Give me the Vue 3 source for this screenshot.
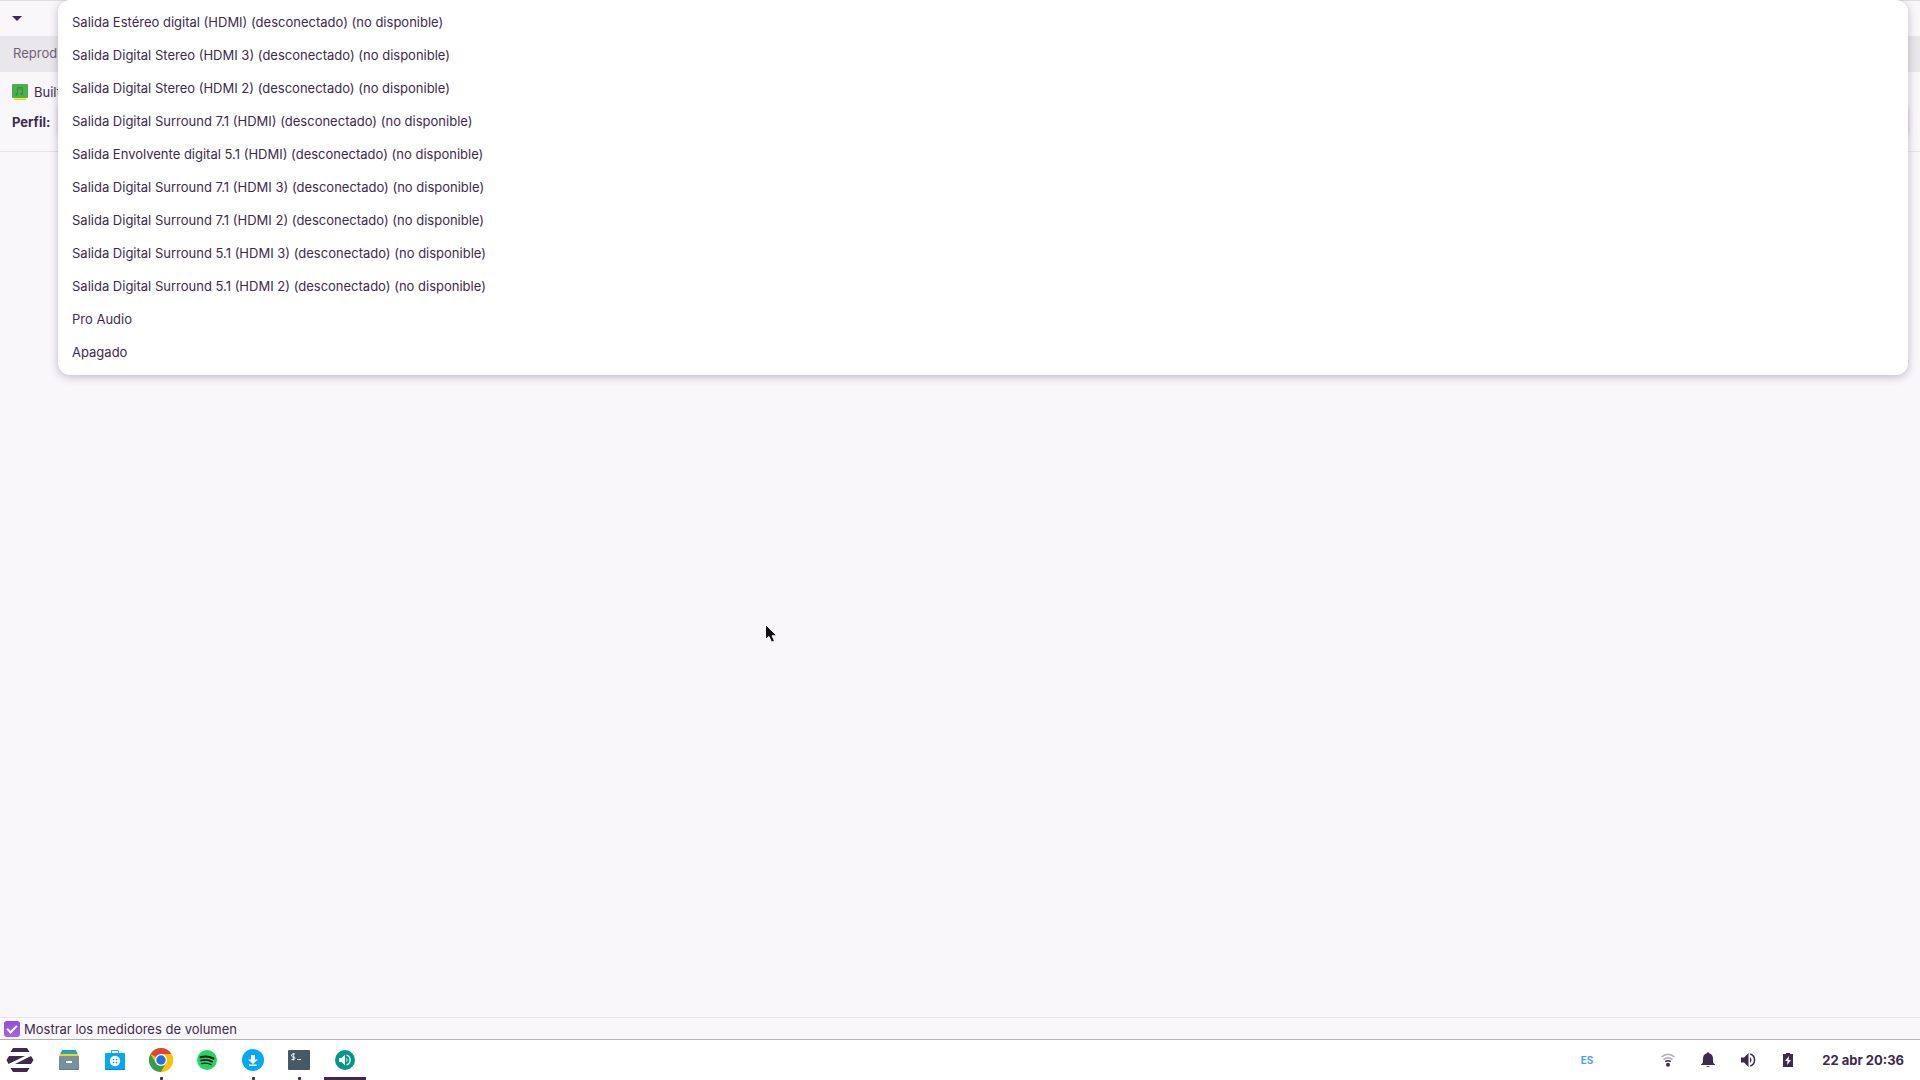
<template>
  <div class="desktop">
    <main class="window">
      <header class="titlebar">
        <button class="window-menu" aria-label="Menú de la ventana">
          <svg width="10" height="5" viewBox="0 0 10 5"><path d="M0 0h10L5 5z" fill="#3d2a4d" /></svg>
        </button>
      </header>

      <nav class="tabs">
        <button class="tab">Reprod</button>
      </nav>

      <section class="card">
        <div class="card-title">
          <svg width="16" height="16" viewBox="0 0 16 16">
            <path d="M2 13h12v3H2z" fill="#fbc02d" />
            <path d="M2 13h12v2H2z" fill="#ffeb3b" />
            <rect width="16" height="14" rx="1" fill="#4caf50" />
            <path d="M5.5 10V3.500h5v6M5.500 5h5" fill="none" stroke="#388e3c" />
            <circle cx="4.800" cy="10.300" r="1.200" fill="#388e3c" />
            <circle cx="9.800" cy="9.700" r="1.200" fill="#388e3c" />
          </svg>
          <span class="card-name">Built</span>
        </div>
        <div class="profile-row">
          <label for="profile">Perfil:</label>
          <select id="profile" v-model="selected" class="profile-select">
            <option v-for="profile in profiles" :key="profile" :value="profile">{{ profile }}</option>
          </select>
        </div>
      </section>

      <div class="device-space"></div>

      <footer class="meters">
        <input id="meters" v-model="showMeters" type="checkbox" />
        <label for="meters">Mostrar los medidores de volumen</label>
      </footer>

      <ul class="menu">
        <li v-for="profile in profiles" :key="profile">
          <button class="menu-item" @click="selected = profile">{{ profile }}</button>
        </li>
      </ul>
    </main>

    <footer class="taskbar">
      <button class="start" aria-label="Menú de Zorin">
        <svg width="28" height="24" viewBox="0 0 28 24" fill="#3d2a4d">
          <path d="M7 0h14l2.500 4h-19z" />
          <path d="M3 8h16L2.500 16 .5 12z" />
          <path d="M25 8l2.500 4-2.500 4H9z" />
          <path d="M4.500 20h19L21 24H7z" />
        </svg>
      </button>

      <div class="apps">
        <button
          v-for="app in apps"
          :key="app.name"
          :class="['app', { running: app.running, active: app.active }]"
          :aria-label="app.label"
        >
          <svg v-if="app.name === 'files'" width="24" height="24" viewBox="0 0 24 24">
            <path d="M5 2h14l1 3H4z" fill="#2196f3" />
            <path d="M4 4h16l1 3H3z" fill="#26b08a" />
            <path d="M3 6h18l1 3H2z" fill="#ffca28" />
            <rect x="2" y="8" width="20" height="14" rx="1" fill="#78909c" />
            <path d="M2 21h20v.5l-1 .5H3l-1-.5z" fill="#607d8b" />
            <rect x="9" y="13" width="6" height="2" fill="#fff" />
          </svg>

          <svg v-else-if="app.name === 'store'" width="24" height="24" viewBox="0 0 24 24">
            <path d="M8.500 5V2.500h7V5" fill="none" stroke="#29a9e8" />
            <rect x="2" y="5" width="20" height="17" rx="1" fill="#03a9f4" />
            <path d="M2 21h20v.5l-1 .5H3l-1-.5z" fill="#0288d1" />
            <circle cx="12" cy="13" r="5.200" fill="#fff" />
            <g fill="#0288d1">
              <circle cx="10.500" cy="11.500" r=".8" />
              <circle cx="13.500" cy="11.500" r=".8" />
              <circle cx="10.500" cy="14.500" r=".8" />
              <circle cx="13.500" cy="14.500" r=".8" />
            </g>
          </svg>

          <svg v-else-if="app.name === 'chrome'" width="24" height="24" viewBox="0 0 24 24">
            <circle cx="12" cy="12" r="12" fill="#ffc107" />
            <path d="M12 12L1.600 6A12 12 0 0 1 22.400 6H12z" fill="#db4437" />
            <path d="M1.600 6A12 12 0 0 0 12 24l5.200-9L12 12 6.800 15z" fill="#2e9e4f" />
            <path d="M12 6h10.400A12 12 0 0 1 12 24l5.200-9z" fill="#ffc107" />
            <circle cx="12" cy="12" r="6" fill="#fff" />
            <circle cx="12" cy="12" r="4.700" fill="#1a73e8" />
          </svg>

          <svg v-else-if="app.name === 'spotify'" width="24" height="24" viewBox="0 0 24 24">
            <circle cx="12" cy="12" r="10" fill="#1ed760" />
            <g fill="none" stroke="#191414" stroke-linecap="round">
              <path d="M5.500 9.200c4-1.300 9-.8 13 1.300" stroke-width="2" />
              <path d="M6 12.500c4-1.100 8-.6 11.300 1.200" stroke-width="1.700" />
              <path d="M6.500 15.600c3.500-.9 6.800-.5 9.500 1" stroke-width="1.400" />
            </g>
          </svg>

          <svg v-else-if="app.name === 'download'" width="24" height="24" viewBox="0 0 24 24">
            <circle cx="12" cy="12" r="11" fill="#03a9f4" />
            <path d="M10 7h4v4.500h3L12 16l-5-4.500h3zM8 16.500h8v1.500H8z" fill="#fff" />
          </svg>

          <svg v-else-if="app.name === 'terminal'" width="24" height="24" viewBox="0 0 24 24">
            <rect x="1" y="2" width="22" height="20" rx="1" fill="#455a64" />
            <path d="M8 6H5.500L4.500 7v1l1 .8h1.500l1 .8v1L7 11.500H4.500M6.300 5v7.500M10 11.500h4" fill="none" stroke="#e1f5fe" />
          </svg>

          <svg v-else width="24" height="24" viewBox="0 0 24 24">
            <circle cx="12" cy="12" r="10" fill="#009688" />
            <path d="M6 10h2.500L12 6.800v10.400L8.500 14H6z" fill="#fff" />
            <path d="M13.500 9.500q2 2.500 0 5z" fill="#fff" />
            <path d="M13.500 7.200a5 5 0 0 1 0 9.600" fill="none" stroke="#fff" stroke-width="1.300" />
          </svg>
        </button>
      </div>

      <div class="tray">
        <button class="keyboard" aria-label="Idioma del teclado">ES</button>
        <button class="tray-item" aria-label="Red">
          <svg width="16" height="16" viewBox="0 0 16 16" fill="none" stroke="#3d2a4d">
            <path d="M1.500 5Q8-.5 14.500 5" stroke-width="1.600" opacity=".4" />
            <path d="M3.500 7.500Q8 4 12.500 7.500" stroke-width="1.600" opacity=".4" />
            <path d="M5.200 9.700Q8 7.800 10.800 9.700" stroke-width="1.500" />
            <circle cx="8" cy="12.800" r="2" fill="#3d2a4d" stroke="none" />
          </svg>
        </button>
        <button class="tray-item" aria-label="Notificaciones">
          <svg width="16" height="16" viewBox="0 0 16 16" fill="#3d2a4d">
            <path d="M7 1.300a1 1 0 0 1 2 0C12 2 13 4.200 13 7v3.500l2 2V13H1v-.5l2-2V7c0-2.800 1-5 4-5.700zM6 14h4q-2 2-4 0z" />
          </svg>
        </button>
        <button class="tray-item" aria-label="Volumen">
          <svg width="16" height="16" viewBox="0 0 16 16">
            <path d="M1 5.500h3L8.500 1v14L4 10.500H1z" fill="#3d2a4d" />
            <path d="M10 5q3 3 0 6z" fill="#3d2a4d" />
            <path d="M10.200 2a6.300 6.300 0 0 1 0 12" fill="none" stroke="#3d2a4d" stroke-width="1.500" />
          </svg>
        </button>
        <button class="tray-item" aria-label="Batería">
          <svg width="16" height="16" viewBox="0 0 16 16">
            <path d="M6 1h4v1h3v13H3V2h3z" fill="#3d2a4d" />
            <path d="M9 4L5 9h2.500L7 13l4-5H8.500z" fill="#fff" />
          </svg>
        </button>
        <time class="clock">22 abr 20:36</time>
      </div>
    </footer>

    <svg class="pointer" width="13" height="20" viewBox="0 0 13 20">
      <path d="M.5.500v15l3.500-3 2.500 5.700 3-1.300L7 11.800h5z" fill="#111" stroke="#fff" />
    </svg>
  </div>
</template>

<script setup>
import { ref } from 'vue'

const profiles = [
  'Salida Estéreo digital (HDMI) (desconectado) (no disponible)',
  'Salida Digital Stereo (HDMI 3) (desconectado) (no disponible)',
  'Salida Digital Stereo (HDMI 2) (desconectado) (no disponible)',
  'Salida Digital Surround 7.1 (HDMI) (desconectado) (no disponible)',
  'Salida Envolvente digital 5.1 (HDMI) (desconectado) (no disponible)',
  'Salida Digital Surround 7.1 (HDMI 3) (desconectado) (no disponible)',
  'Salida Digital Surround 7.1 (HDMI 2) (desconectado) (no disponible)',
  'Salida Digital Surround 5.1 (HDMI 3) (desconectado) (no disponible)',
  'Salida Digital Surround 5.1 (HDMI 2) (desconectado) (no disponible)',
  'Pro Audio',
  'Apagado'
]

const apps = [
  { name: 'files', label: 'Archivos' },
  { name: 'store', label: 'Software' },
  { name: 'chrome', label: 'Google Chrome', running: true },
  { name: 'spotify', label: 'Spotify' },
  { name: 'download', label: 'Descargas', running: true },
  { name: 'terminal', label: 'Terminal', running: true },
  { name: 'volume', label: 'Control de volumen', active: true }
]

const selected = ref('Apagado')
const showMeters = ref(true)
</script>

<style>
body {
  margin: 0;
}
</style>

<style scoped>
.desktop {
  position: relative;
  display: flex;
  flex-direction: column;
  min-height: 100vh;
  overflow: hidden;
  background: #f9f7fa;
  color: #3d2a4d;
  font-family: Inter, "Liberation Sans", sans-serif;
  font-size: 13px;
  line-height: 20px;
}

button {
  display: flex;
  align-items: center;
  padding: 0;
  border: 0;
  background: none;
  color: inherit;
  font: inherit;
}

svg {
  display: block;
  flex: none;
}

.window {
  position: relative;
  display: flex;
  flex: 1;
  flex-direction: column;
}

.titlebar {
  display: flex;
  align-items: center;
  box-sizing: border-box;
  height: 36px;
  padding: 0 12px;
  border-top: 1px solid #dfdce2;
}

.tabs {
  display: flex;
  box-sizing: border-box;
  height: 36px;
  padding: 0 13px 2px;
  background: #e9e7eb;
}

.tab {
  color: #6f5f7c;
}

.card {
  display: flex;
  flex-direction: column;
  gap: 3px;
  padding: 10px 12px 13px;
  border-bottom: 1px solid #e6e3e9;
}

.card-title {
  display: flex;
  align-items: center;
  gap: 6px;
}

.profile-row {
  display: flex;
  align-items: center;
  gap: 6px;
}

.profile-row label {
  width: 40px;
  font-weight: 700;
}

.profile-select {
  flex: 1;
  min-width: 0;
  height: 33px;
  border: 0;
  border-radius: 6px;
  background: #fff;
  box-shadow: 0 0 4px rgba(150, 80, 200, 0.3);
  color: inherit;
  font: inherit;
}

.device-space {
  flex: 1;
}

.meters {
  display: flex;
  align-items: center;
  gap: 4px;
  height: 21px;
  padding: 0 4px;
  border-top: 1px solid #e6e3e9;
}

.meters input {
  display: grid;
  place-items: center;
  width: 16px;
  height: 16px;
  margin: 0;
  border-radius: 3px;
  appearance: none;
  background: linear-gradient(#8e4fd8, #a268e8);
}

.meters input:checked::after {
  width: 8px;
  height: 4px;
  border: solid #fff;
  border-width: 0 0 2px 2px;
  content: "";
  transform: translateY(-1px) rotate(-45deg);
}

.menu {
  position: absolute;
  top: 0;
  right: 12px;
  left: 58px;
  margin: 0;
  padding: 5px 0 7px;
  border-radius: 12px;
  background: #fff;
  box-shadow: 0 2px 8px rgba(61, 42, 77, 0.3);
  list-style: none;
}

.menu-item {
  width: 100%;
  height: 33px;
  padding: 0 14px;
}

.taskbar {
  display: flex;
  align-items: stretch;
  height: 40px;
  border-top: 1px solid #b3b0b6;
  background: #fff;
}

.start {
  justify-content: center;
  width: 40px;
}

.apps {
  display: flex;
  gap: 4px;
  padding-left: 8px;
}

.app {
  position: relative;
  justify-content: center;
  width: 42px;
}

.running::after,
.active::after {
  position: absolute;
  bottom: 0;
  width: 3px;
  height: 3px;
  border-radius: 1px;
  background: #3d2a4d;
  content: "";
}

.active::after {
  width: 42px;
  border-radius: 0;
}

.tray {
  display: flex;
  align-items: center;
  gap: 24px;
  margin-left: auto;
  padding-right: 16px;
}

.keyboard {
  margin-right: 43px;
  color: #4aa3df;
  font-size: 10px;
  font-weight: 700;
}

.clock {
  padding-left: 2px;
  font-weight: 700;
}

.pointer {
  position: absolute;
  top: 624px;
  left: 765px;
}
</style>
